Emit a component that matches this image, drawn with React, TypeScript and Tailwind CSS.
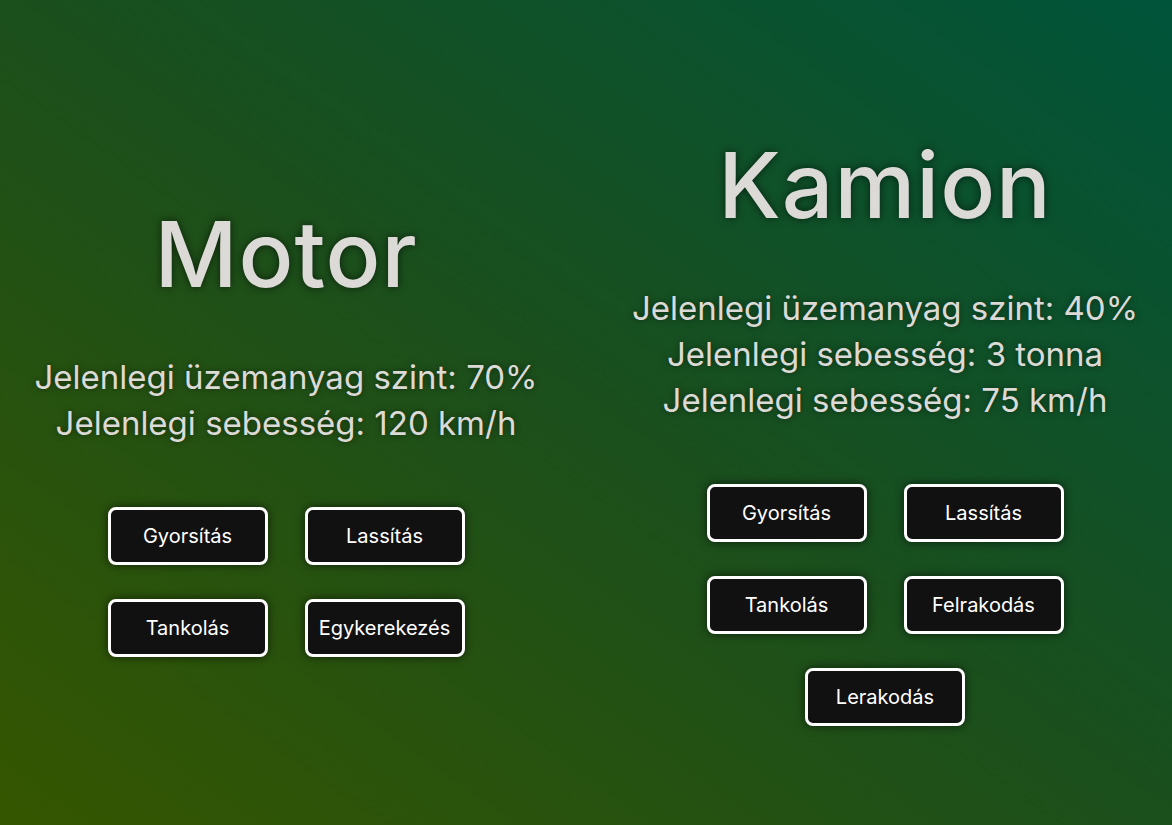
const vehicles = [
  {
    name: "Motor",
    stats: ["Jelenlegi üzemanyag szint: 70%", "Jelenlegi sebesség: 120 km/h"],
    actions: ["Gyorsítás", "Lassítás", "Tankolás", "Egykerekezés"],
  },
  {
    name: "Kamion",
    stats: [
      "Jelenlegi üzemanyag szint: 40%",
      "Jelenlegi sebesség: 3 tonna",
      "Jelenlegi sebesség: 75 km/h",
    ],
    actions: ["Gyorsítás", "Lassítás", "Tankolás", "Felrakodás", "Lerakodás"],
  },
]

function VehicleCard({ vehicle }: { vehicle: (typeof vehicles)[number] }) {
  return (
    <div className="flex flex-col items-center text-center">
      <h1 className="text-[91px] leading-[110px] font-medium tracking-[1px] text-[#dcdad6] [text-shadow:0_0_8px_rgba(0,0,0,0.6)]">
        {vehicle.name}
      </h1>
      <div className="mt-[45px] text-[33px] leading-[46px] text-[#dcdad6] [text-shadow:0_0_6px_rgba(0,0,0,0.5)]">
        {vehicle.stats.map((s, i) => (
          <p key={i}>{s}</p>
        ))}
      </div>
      <div className="mt-[61px] flex w-[357px] flex-wrap justify-center gap-x-[37px] gap-y-[34px]">
        {vehicle.actions.map((a) => (
          <button
            key={a}
            className="h-[58px] w-[160px] rounded-[8px] border-[3px] border-white bg-[#111111] text-[20px] text-white shadow-[0_0_10px_rgba(0,0,0,0.6)]"
          >
            {a}
          </button>
        ))}
      </div>
    </div>
  )
}

export default function App() {
  return (
    <div className="flex h-[825px] w-full items-center bg-[linear-gradient(to_top_right,#355600,#1b4f1c_50%,#00543a)] pt-[31px] font-['Inter',sans-serif]">
      <div className="flex w-[572px] justify-center">
        <VehicleCard vehicle={vehicles[0]} />
      </div>
      <div className="ml-[26px] flex w-[574px] justify-center">
        <VehicleCard vehicle={vehicles[1]} />
      </div>
    </div>
  )
}
